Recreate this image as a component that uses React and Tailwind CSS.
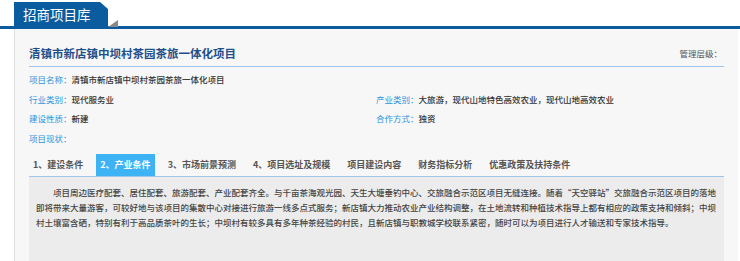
import * as React from 'react';

const tabs = [
  '1、建设条件',
  '2、产业条件',
  '3、市场前景预测',
  '4、项目选址及规模',
  '项目建设内容',
  '财务指标分析',
  '优惠政策及扶持条件',
];

const Field = ({ label, value }) => (
  <div className="leading-[19.5px] h-[19.5px] whitespace-nowrap">
    <span className="text-[#2a95e0]">{label}：</span>
    <span className="text-[#333] font-medium">{value}</span>
  </div>
);

const App = () => {
  const [active, setActive] = React.useState(1);

  return (
    <div
      className="w-[740px] h-[261px] overflow-hidden bg-white"
      style={{ fontFamily: '"Noto Sans CJK SC", "Noto Sans", sans-serif' }}
    >
      {/* header tab */}
      <div className="flex items-end pl-[14px] pt-[3px] h-[29px] border-b-[3px] border-[#0b5c9e]">
        <div className="h-[24px] w-[94px] bg-[#0b5c9e] text-white text-[13.5px] leading-[24px] pl-[9px] [clip-path:polygon(0_0,86px_0,100%_7px,100%_100%,0_100%)]">
          招商项目库
        </div>
        <svg width="10" height="7" viewBox="0 0 10 7" className="mb-[-1px]">
          <polygon points="0,7 10,0 10,7" fill="#8a8a8a" />
        </svg>
      </div>

      {/* panel */}
      <div className="ml-[14px] w-[724px] h-[232px] bg-[#f7f7f7] border-l border-[#dcdcdc] px-[14px] pt-[16px]">
        <div className="flex justify-between items-center h-[16px] pb-[5px] box-content border-b border-[#9fc6ea]">
          <div className="text-[11.5px] font-bold text-[#1f4f8a] leading-[16px]">
            清镇市新店镇中坝村茶园茶旅一体化项目
          </div>
          <div className="text-[8.5px] text-[#555] pr-[2px]">管理层级：</div>
        </div>

        <div className="mt-[3px] grid grid-cols-[347px_1fr] text-[8.5px]">
          <Field label="项目名称" value="清镇市新店镇中坝村茶园茶旅一体化项目" />
          <div />
          <Field label="行业类别" value="现代服务业" />
          <Field label="产业类别" value="大旅游，现代山地特色高效农业，现代山地高效农业" />
          <Field label="建设性质" value="新建" />
          <Field label="合作方式" value="独资" />
          <Field label="项目现状" value="" />
          <div />
        </div>

        <div className="mt-[6px] flex gap-[9px] border-b border-[#9fc6ea]">
          {tabs.map((t, i) => (
            <div
              key={t}
              onClick={() => setActive(i)}
              className={
                i === active
                  ? 'h-[22px] leading-[22px] px-[4px] text-[9px] font-semibold bg-[#3db3f6] text-white cursor-pointer'
                  : 'h-[22px] leading-[22px] px-[4px] text-[9px] font-semibold text-[#555] cursor-pointer'
              }
            >
              {t}
            </div>
          ))}
        </div>

        <div className="bg-[#ececec] h-[90px] pl-[7px] pr-[3px] pt-[8px] text-[8.5px] leading-[15px] text-[#444] font-medium">
          <p className="indent-[17px]">
            项目周边医疗配套、居住配套、旅游配套、产业配套齐全。与千亩茶海观光园、天生大塘垂钓中心、交旅融合示范区项目无缝连接。随着“天空驿站”交旅融合示范区项目的落地即将带来大量游客，可较好地与该项目的集散中心对接进行旅游一线多点式服务；新店镇大力推动农业产业结构调整，在土地流转和种植技术指导上都有相应的政策支持和倾斜；中坝村土壤富含硒，特别有利于高品质茶叶的生长；中坝村有较多具有多年种茶经验的村民，且新店镇与职教城学校联系紧密，随时可以为项目进行人才输送和专家技术指导。
          </p>
        </div>
      </div>
    </div>
  );
};

export default App;
